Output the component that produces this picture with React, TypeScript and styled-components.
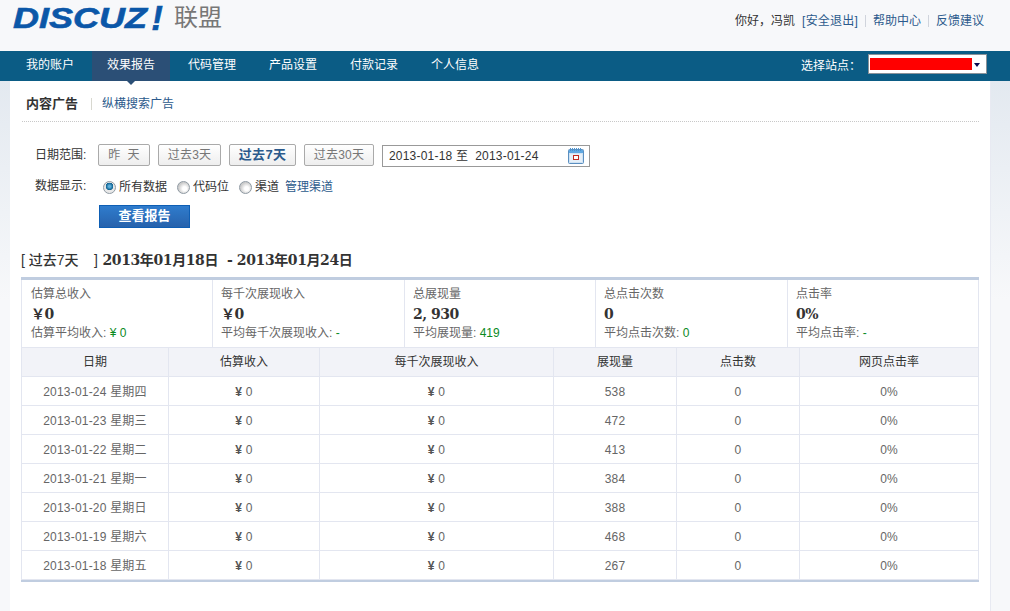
import styled, { createGlobalStyle } from 'styled-components';

const GlobalStyle = createGlobalStyle`
  html, body {
    margin: 0;
    padding: 0;
  }

  body {
    background: linear-gradient(#e3e9f0 81px, #f7f8fa 300px) no-repeat #f7f8fa;
    color: #333;
    font: 12px/1.5 "Liberation Sans", "Noto Sans CJK SC", sans-serif;
  }

  a {
    color: #2b5a8c;
    text-decoration: none;
  }
`;

const navItems = ['我的账户', '效果报告', '代码管理', '产品设置', '付款记录', '个人信息'];

const ranges = [
  { label: '昨  天', width: 52 },
  { label: '过去3天', width: 63 },
  { label: '过去7天', width: 67, active: true },
  { label: '过去30天', width: 70 },
];

const summary = [
  { title: '估算总收入', value: '￥0', subLabel: '估算平均收入:', sub: '¥ 0' },
  { title: '每千次展现收入', value: '￥0', subLabel: '平均每千次展现收入:', sub: '-' },
  { title: '总展现量', value: '2, 930', subLabel: '平均展现量:', sub: '419' },
  { title: '总点击次数', value: '0', subLabel: '平均点击次数:', sub: '0' },
  { title: '点击率', value: '0%', subLabel: '平均点击率:', sub: '-' },
];

const rows = [
  ['2013-01-24', '星期四', 538],
  ['2013-01-23', '星期三', 472],
  ['2013-01-22', '星期二', 413],
  ['2013-01-21', '星期一', 384],
  ['2013-01-20', '星期日', 388],
  ['2013-01-19', '星期六', 468],
  ['2013-01-18', '星期五', 267],
];

const CalendarIcon = () => (
  <svg width="17" height="18" viewBox="0 0 17 18">
    <rect x="0.5" y="2.5" width="15" height="14" rx="1" fill="#cfe2f3" stroke="#5b8fc0" />
    <rect x="1" y="3" width="14" height="3" fill="#5fa8e2" />
    <path d="M2.5 1v3M4.5 1v3M6.5 1v3M8.5 1v3M10.5 1v3M12.5 1v3" stroke="#4f93cc" strokeWidth="1" />
    <rect x="2" y="7" width="12" height="8" fill="#e6f0f9" />
    <rect x="5.5" y="8.5" width="5" height="4" fill="#fff" stroke="#c22a1e" />
  </svg>
);

const App = () => {
  return (
    <>
      <GlobalStyle />
      <Header>
        <Brand>
          <Logo>
            <LogoText>DISCUZ</LogoText>
            <LogoMark>!</LogoMark>
          </Logo>
          <BrandName>联盟</BrandName>
        </Brand>
        <UserBar>
          <span>你好，冯凯</span>
          <LogoutLink href="#">[安全退出]</LogoutLink>
          <BarSep />
          <a href="#">帮助中心</a>
          <BarSep />
          <a href="#">反馈建议</a>
        </UserBar>
      </Header>
      <Nav>
        <NavList>
          {navItems.map((item, i) => (
            <NavItem key={item} $active={i === 1}>{item}</NavItem>
          ))}
        </NavList>
        <SiteSelect>
          <SiteLabel>选择站点：</SiteLabel>
          <SelectBox>
            <RedBar />
            <SelectArrow />
          </SelectBox>
        </SiteSelect>
      </Nav>
      <Page>
        <Tabs>
          <ActiveTab>内容广告</ActiveTab>
          <TabSep />
          <a href="#">纵横搜索广告</a>
        </Tabs>
        <Filters>
          <FilterRow>
            <FilterLabel>日期范围:</FilterLabel>
            <RangeButtons>
              {ranges.map((r) => (
                <RangeButton key={r.label} $width={r.width} $active={r.active}>{r.label}</RangeButton>
              ))}
            </RangeButtons>
            <DateBox>
              <span>2013-01-18 至&nbsp; 2013-01-24</span>
              <CalendarIcon />
            </DateBox>
          </FilterRow>
          <RadioRow>
            <RadioLabel>数据显示:</RadioLabel>
            <RadioGroup>
              <RadioOption><Radio $checked />所有数据</RadioOption>
              <RadioOption><Radio />代码位</RadioOption>
              <RadioOption><Radio />渠道<ManageLink href="#">管理渠道</ManageLink></RadioOption>
            </RadioGroup>
          </RadioRow>
          <SubmitButton>查看报告</SubmitButton>
        </Filters>
        <ReportTitle>
          <TitleRange>[ 过去7天&nbsp;&nbsp;&nbsp; ]</TitleRange> 2013年01月18日&nbsp; - 2013年01月24日
        </ReportTitle>
        <Report>
          <Summary>
            {summary.map((s) => (
              <SummaryCell key={s.title}>
                <SummaryTitle>{s.title}</SummaryTitle>
                <SummaryValue>{s.value}</SummaryValue>
                <SummarySub>{s.subLabel} <Green>{s.sub}</Green></SummarySub>
              </SummaryCell>
            ))}
          </Summary>
          <Table>
            <colgroup>
              <col width="147" />
              <col width="151" />
              <col width="234" />
              <col width="123" />
              <col width="123" />
              <col width="179" />
            </colgroup>
            <thead>
              <tr>
                <Th>日期</Th>
                <Th>估算收入</Th>
                <Th>每千次展现收入</Th>
                <Th>展现量</Th>
                <Th>点击数</Th>
                <Th>网页点击率</Th>
              </tr>
            </thead>
            <tbody>
              {rows.map((row) => (
                <tr key={row[0]}>
                  <Td>{row[0]} {row[1]}</Td>
                  <Td><Yen>¥</Yen> 0</Td>
                  <Td><Yen>¥</Yen> 0</Td>
                  <Td>{row[2]}</Td>
                  <Td>0</Td>
                  <Td>0%</Td>
                </tr>
              ))}
            </tbody>
          </Table>
        </Report>
      </Page>
    </>
  );
};

const Header = styled.header`
  height: 51px;
  display: flex;
  justify-content: space-between;
  padding: 0 26px 0 13px;
  background: #f7f8fa;
`;

const Brand = styled.div`
  display: flex;
  align-items: flex-start;
`;

const Logo = styled.div`
  width: 150px;
  height: 34px;
  padding-top: 2px;
  display: flex;
  align-items: flex-start;
  font-family: "Liberation Sans", sans-serif;
  font-style: italic;
  font-weight: 700;
  color: #0b57a8;
  -webkit-text-stroke: 0.6px #0b57a8;
`;

const LogoText = styled.span`
  display: block;
  width: 140px;
  font-size: 30px;
  line-height: 32px;
  transform: scaleX(1.2);
  transform-origin: left top;
`;

const LogoMark = styled.span`
  display: block;
  font-size: 35px;
  line-height: 32px;
`;

const BrandName = styled.div`
  margin-left: 11px;
  margin-top: 1px;
  font-size: 24px;
  line-height: 34px;
  color: #777;
`;

const UserBar = styled.div`
  display: flex;
  align-items: center;
  height: 41px;
  color: #333;
  span {
    margin-right: 7px;
  }
`;

const LogoutLink = styled.a`
  letter-spacing: 0.2px;
`;

const BarSep = styled.i`
  width: 1px;
  height: 12px;
  margin: 0 7px;
  background: #d0d4dc;
`;

const Nav = styled.nav`
  position: relative;
  z-index: 1;
  height: 30px;
  background: #0b5c85;
  display: flex;
  justify-content: space-between;
  padding: 0 23px 0 11px;
`;

const NavList = styled.ul`
  display: flex;
  gap: 3px;
  margin: 0;
  padding: 0;
  list-style: none;
`;

const NavItem = styled.li<{ $active?: boolean }>`
  position: relative;
  padding: 0 15px;
  line-height: 28px;
  color: #fff;
  background: ${(p) => (p.$active ? '#2b4f76' : 'transparent')};

  &::after {
    content: '';
    display: ${(p) => (p.$active ? 'block' : 'none')};
    position: absolute;
    left: 50%;
    bottom: -4px;
    margin-left: -4px;
    border-style: solid;
    border-width: 4px 4px 0;
    border-color: #2b4f76 transparent transparent;
  }
`;

const SiteSelect = styled.div`
  display: flex;
  align-items: flex-start;
  gap: 7px;
  color: #fff;
`;

const SiteLabel = styled.span`
  line-height: 28px;
  padding-top: 1px;
`;

const SelectBox = styled.div`
  box-sizing: border-box;
  width: 119px;
  height: 20px;
  margin-top: 3px;
  border: 1px solid #8a9299;
  background: #fff;
  display: flex;
  align-items: center;
  padding-left: 1px;
`;

const RedBar = styled.div`
  width: 102px;
  height: 12px;
  background: #f00;
`;

const SelectArrow = styled.div`
  margin: 1px 0 0 2px;
  border-style: solid;
  border-width: 4px 3.5px 0;
  border-color: #0a0a50 transparent transparent;
`;

const Page = styled.main`
  margin: 0 20px 0 10px;
  padding: 0 11px 30px;
  background: #fff;
  box-shadow: 1px 0 0 #e8eaf2;
  min-height: 500px;
`;

const Tabs = styled.div`
  box-sizing: border-box;
  height: 41px;
  margin: 0 0 22px 1px;
  padding: 6px 0 0 4px;
  display: flex;
  align-items: center;
  border-bottom: 1px dotted #c8c8c8;
`;

const ActiveTab = styled.strong`
  font-size: 13px;
  color: #333;
`;

const TabSep = styled.i`
  width: 1px;
  height: 12px;
  margin: 0 10px 0 13px;
  background: #d8d8d0;
`;

const Filters = styled.section`
  padding-left: 14px;
`;

const FilterRow = styled.div`
  display: flex;
  align-items: flex-start;
  height: 23px;
`;

const FilterLabel = styled.label`
  width: 63px;
  line-height: 22px;
  color: #333;
`;

const RadioLabel = styled(FilterLabel)`
  margin-top: -2px;
`;

const RangeButtons = styled.div`
  display: flex;
  gap: 8px;
  margin-right: 8px;
`;

const RangeButton = styled.button<{ $width: number; $active?: boolean }>`
  box-sizing: border-box;
  width: ${(p) => p.$width}px;
  height: 22px;
  padding: 0 0 1px;
  border: 1px solid #aaa;
  border-radius: 2px;
  background: linear-gradient(#fff, #eee);
  white-space: pre;
  font: inherit;
  font-size: ${(p) => (p.$active ? 13 : 12)}px;
  font-weight: ${(p) => (p.$active ? 700 : 400)};
  letter-spacing: ${(p) => (p.$active ? 0.3 : 0.2)}px;
  color: ${(p) => (p.$active ? '#2b5a8c' : '#777')};
`;

const DateBox = styled.div`
  box-sizing: border-box;
  width: 208px;
  height: 22px;
  margin-top: 1px;
  padding: 0 4px 0 6px;
  border: 1px solid #999;
  display: flex;
  align-items: center;
  justify-content: space-between;
  color: #333;
  letter-spacing: 0.2px;
`;

const RadioRow = styled.div`
  display: flex;
  align-items: center;
  height: 22px;
  margin-top: 9px;
`;

const RadioGroup = styled.div`
  display: flex;
  gap: 10px;
  margin-left: 5px;
`;

const RadioOption = styled.span`
  display: flex;
  align-items: center;
  gap: 3px;
`;

const Radio = styled.i<{ $checked?: boolean }>`
  box-sizing: border-box;
  width: 13px;
  height: 13px;
  border-radius: 50%;
  border: 1px solid #8f9aa3;
  background: ${(p) =>
    p.$checked
      ? 'radial-gradient(circle at 50% 40%, #5fb0dc 0 1px, #0a5f8f 3.5px, #e8e8e8 4px)'
      : 'radial-gradient(circle at 60% 60%, #fff 0 2px, #ccc 6px)'};
`;

const ManageLink = styled.a`
  margin-left: 3px;
`;

const SubmitButton = styled.button`
  display: block;
  box-sizing: border-box;
  width: 91px;
  height: 23px;
  margin: 7px 0 0 64px;
  padding: 0 0 1px;
  border: 1px solid #0e5eb4;
  background: linear-gradient(#2f7ccd, #2762ac);
  color: #fff;
  font: inherit;
  font-size: 13px;
  font-weight: 700;
`;

const ReportTitle = styled.h2`
  margin: 22px 0 6px;
  font-family: "DejaVu Serif", "Noto Sans CJK SC", serif;
  font-size: 14px;
  line-height: 21px;
  font-weight: 700;
  letter-spacing: -0.4px;
  color: #333;
`;

const TitleRange = styled.span`
  font-family: "Liberation Sans", "Noto Sans CJK SC", sans-serif;
  font-weight: 500;
  letter-spacing: 0;
`;

const Report = styled.div`
  border-top: 3px solid #c0cde0;
  border-bottom: 2px solid #c0cde0;
`;

const Summary = styled.div`
  display: grid;
  grid-template-columns: 191px 192px 191px 192px 1fr;
  margin-left: 1px;
  border-right: 1px solid #e3e6f0;
`;

const SummaryCell = styled.div`
  box-sizing: border-box;
  height: 67px;
  padding: 5px 8px 0;
  border-right: 1px solid #e3e6f0;
  color: #666;

  &:first-child {
    padding-left: 9px;
    box-shadow: -1px 0 0 #e3e6f0;
  }

  &:last-child {
    border-right: 0;
  }
`;

const SummaryTitle = styled.div`
  line-height: 18px;
`;

const SummaryValue = styled.div`
  font-family: "DejaVu Serif", "Noto Sans CJK SC", serif;
  font-size: 14px;
  line-height: 22px;
  font-weight: 700;
  letter-spacing: -0.5px;
  color: #333;
`;

const SummarySub = styled.div`
  line-height: 16px;
`;

const Green = styled.span`
  color: #0a8a1e;
`;

const Table = styled.table`
  width: 100%;
  table-layout: fixed;
  border-collapse: collapse;
`;

const Th = styled.th`
  height: 29px;
  padding: 0 0 1px;
  box-sizing: border-box;
  border: 1px solid #e3e6f0;
  background: #f2f3f8;
  font-weight: 400;
  color: #333;
`;

const Td = styled.td`
  height: 29px;
  padding: 1px 0 0;
  box-sizing: border-box;
  border: 1px solid #e3e6f0;
  text-align: center;
  letter-spacing: 0.2px;
  color: #666;
`;

const Yen = styled.span`
  font-weight: 700;
  color: #555;
`;

export default App;
